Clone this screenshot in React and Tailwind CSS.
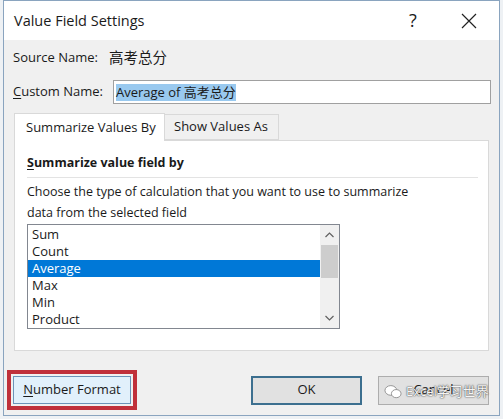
import React from 'react';

const font = { fontFamily: '"Open Sans", "Noto Sans CJK SC", sans-serif' };

function Underlined({ ch, rest }) {
    return (
        <span>
            <span className="underline underline-offset-2">{ch}</span>
            {rest}
        </span>
    );
}

const items = ['Sum', 'Count', 'Average', 'Max', 'Min', 'Product'];

export default function App() {
    return (
        <div className="w-[503px] h-[419px] bg-[#eef1f4] pl-[3px] overflow-hidden text-[#1a1a1a]" style={font}>
            <div className="relative w-[497px] h-[416px] border border-[#8aa4bf] bg-[#f0f0f0] flex flex-col">
                {/* Title bar */}
                <div className="h-[39px] bg-white flex items-center pl-[10px] shrink-0">
                    <span className="text-[14.5px] flex-1">Value Field Settings</span>
                    <span className="text-[18px] w-[20px] mr-[38px] text-center">?</span>
                    <svg width="16" height="16" viewBox="0 0 16 16" className="mr-[22px]">
                        <path d="M1 1 L15 15 M15 1 L1 15" stroke="#222" strokeWidth="1.2" />
                    </svg>
                </div>

                {/* Names */}
                <div className="flex items-center h-[20px] mt-[8px] pl-[9px] text-[13px]">
                    <span className="w-[96px]">Source Name:</span>
                    <span className="text-[14.5px]">高考总分</span>
                </div>
                <div className="flex items-center mt-[12px] pl-[9px] text-[13px]">
                    <span className="w-[100px]"><Underlined ch="C" rest="ustom Name:" /></span>
                    <div className="w-[378px] h-[24px] bg-white border border-[#a0a0a0] flex items-center pl-[2px]">
                        <span className="bg-[#99c9ef] leading-[17px]">Average of 高考总分</span>
                    </div>
                </div>

                {/* Tabs */}
                <div className="mx-[10px] mt-[9px] flex items-end text-[13px]">
                    <div className="w-[151px] h-[28px] bg-white border border-[#d9d9d9] border-b-0 flex items-center pl-[11px] -mb-px relative z-10">
                        Summarize Values By
                    </div>
                    <div className="w-[114px] h-[26px] bg-[#f0f0f0] border border-[#d9d9d9] border-l-0 flex items-center pl-[9px]">
                        Show Values As
                    </div>
                </div>
                <div className="mx-[10px] h-[211px] bg-white border border-[#d9d9d9] px-[12px] text-[13px]">
                    <div className="mt-[13px] font-bold text-[12.5px] leading-[18px]"><Underlined ch="S" rest="ummarize value field by" /></div>
                    <div className="mt-[5px] border-t border-[#e3e3e3] w-[451px]" />
                    <div className="mt-[3px] leading-[21px] text-[12.5px]">
                        Choose the type of calculation that you want to use to summarize<br />
                        data from the selected field
                    </div>
                    <div className="mt-[1px] w-[313px] h-[105px] border border-[#828790] flex">
                        <div className="flex-1 pt-[1px]">
                            {items.map((it) => (
                                <div
                                    key={it}
                                    className={`h-[17px] leading-[17px] pl-[4px] ${it === 'Average' ? 'bg-[#0078d7] text-white' : ''}`}
                                >
                                    {it}
                                </div>
                            ))}
                        </div>
                        <div className="w-[19px] bg-[#f0f0f0] flex flex-col items-center">
                            <div className="h-[20px] flex items-center justify-center">
                                <svg width="9" height="6" viewBox="0 0 9 6"><path d="M0.5 5 L4.5 1 L8.5 5" stroke="#606060" fill="none" strokeWidth="1.2" /></svg>
                            </div>
                            <div className="w-[17px] h-[33px] bg-[#cdcdcd]" />
                            <div className="flex-1" />
                            <div className="h-[20px] flex items-center justify-center">
                                <svg width="9" height="6" viewBox="0 0 9 6"><path d="M0.5 1 L4.5 5 L8.5 1" stroke="#606060" fill="none" strokeWidth="1.2" /></svg>
                            </div>
                        </div>
                    </div>
                </div>

                {/* Buttons */}
                <div className="flex items-center mt-[19px] pl-[3px] pr-[10px] text-[13px]">
                    <div className="border-[4px] border-[#c0303a] p-[2px]">
                        <button className="w-[118px] h-[28px] bg-[#e1f0fb] border border-[#6b93b8]">
                            <Underlined ch="N" rest="umber Format" />
                        </button>
                    </div>
                    <div className="flex-1" />
                    <button className="w-[111px] h-[29px] bg-[#e1e1e1] border-2 border-[#3c6f8f]">OK</button>
                    <button className="relative w-[111px] h-[29px] ml-[16px] bg-[#e1e1e1] border border-[#adadad]">
                        Cancel
                        <span className="absolute left-[5px] top-[5px] flex items-center gap-[4px] whitespace-nowrap text-[#f5f5f5] text-[13px]" style={{ textShadow: '0 0 2px #555, 0 0 1px #333' }}>
                            <svg width="18" height="15" viewBox="0 0 16 14">
                                <ellipse cx="6" cy="6" rx="5.5" ry="4.5" fill="#fff" stroke="#888" strokeWidth="0.8" />
                                <ellipse cx="11" cy="9" rx="4.5" ry="3.8" fill="#fff" stroke="#888" strokeWidth="0.8" />
                            </svg>
                            Excel学习世界
                        </span>
                    </button>
                </div>
            </div>
        </div>
    );
}
